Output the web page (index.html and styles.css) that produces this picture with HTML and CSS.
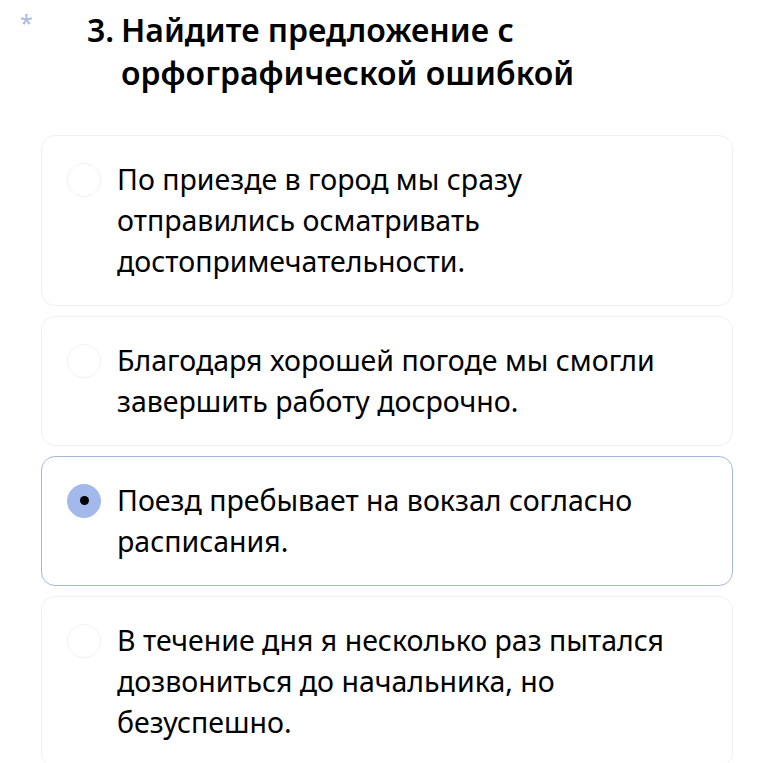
FILE: index.html
```html
<!DOCTYPE html>
<html lang="ru">
<head>
  <meta charset="UTF-8">
  <meta name="viewport" content="width=device-width, initial-scale=1.0">
  <title>Вопрос 3</title>
  <link rel="stylesheet" href="styles.css">
</head>
<body>
  <div class="question">
    <div class="question-head">
      <span class="required">*</span>
      <span class="question-num">3.</span>
      <h2 class="question-title">Найдите предложение с орфографической ошибкой</h2>
    </div>

    <div class="options">
      <label class="option">
        <span class="radio"></span>
        <span class="option-text">По приезде в город мы сразу отправились осматривать достопримечательности.</span>
      </label>
      <label class="option">
        <span class="radio"></span>
        <span class="option-text">Благодаря хорошей погоде мы смогли завершить работу досрочно.</span>
      </label>
      <label class="option checked">
        <span class="radio"></span>
        <span class="option-text">Поезд пребывает на вокзал согласно расписания.</span>
      </label>
      <label class="option">
        <span class="radio"></span>
        <span class="option-text">В течение дня я несколько раз пытался дозвониться до начальника, но безуспешно.</span>
      </label>
    </div>
  </div>
</body>
</html>
```

FILE: styles.css
```css
body {
  margin: 0;
  padding: 0;
  font-family: "Noto Sans", Arial, sans-serif;
  background: #ffffff;
  color: #000000;
  overflow: hidden;
}

.question {
  padding: 8px 48px 0 20px;
}

.question-head {
  display: flex;
  align-items: flex-start;
}

.required {
  width: 67px;
  flex-shrink: 0;
  color: #a6b9e3;
  font-size: 23px;
  line-height: 30px;
}

.question-num,
.question-title {
  font-size: 32px;
  font-weight: 600;
  line-height: 43px;
}

.question-num {
  width: 34px;
  flex-shrink: 0;
}

.question-title {
  margin: 0;
  max-width: 480px;
}

.options {
  display: flex;
  flex-direction: column;
  gap: 10px;
  margin-top: 41px;
  margin-left: 21px;
}

.option {
  display: flex;
  align-items: flex-start;
  gap: 16px;
  padding: 23px 40px 23px 25px;
  border: 1px solid #f0f0f0;
  border-radius: 14px;
  cursor: pointer;
}

.option.checked {
  border-color: #a6b8d9;
}

.radio {
  width: 32px;
  height: 32px;
  margin-top: 3.5px;
  flex-shrink: 0;
  border: 1px solid #f2f2f2;
  border-radius: 50%;
  display: flex;
  align-items: center;
  justify-content: center;
}

.option.checked .radio {
  background: #a4b9eb;
  border-color: #a4b9eb;
}

.option.checked .radio::after {
  content: "";
  width: 9px;
  height: 9px;
  border-radius: 50%;
  background: #000000;
}

.option-text {
  font-size: 28.5px;
  line-height: 41px;
}
```
